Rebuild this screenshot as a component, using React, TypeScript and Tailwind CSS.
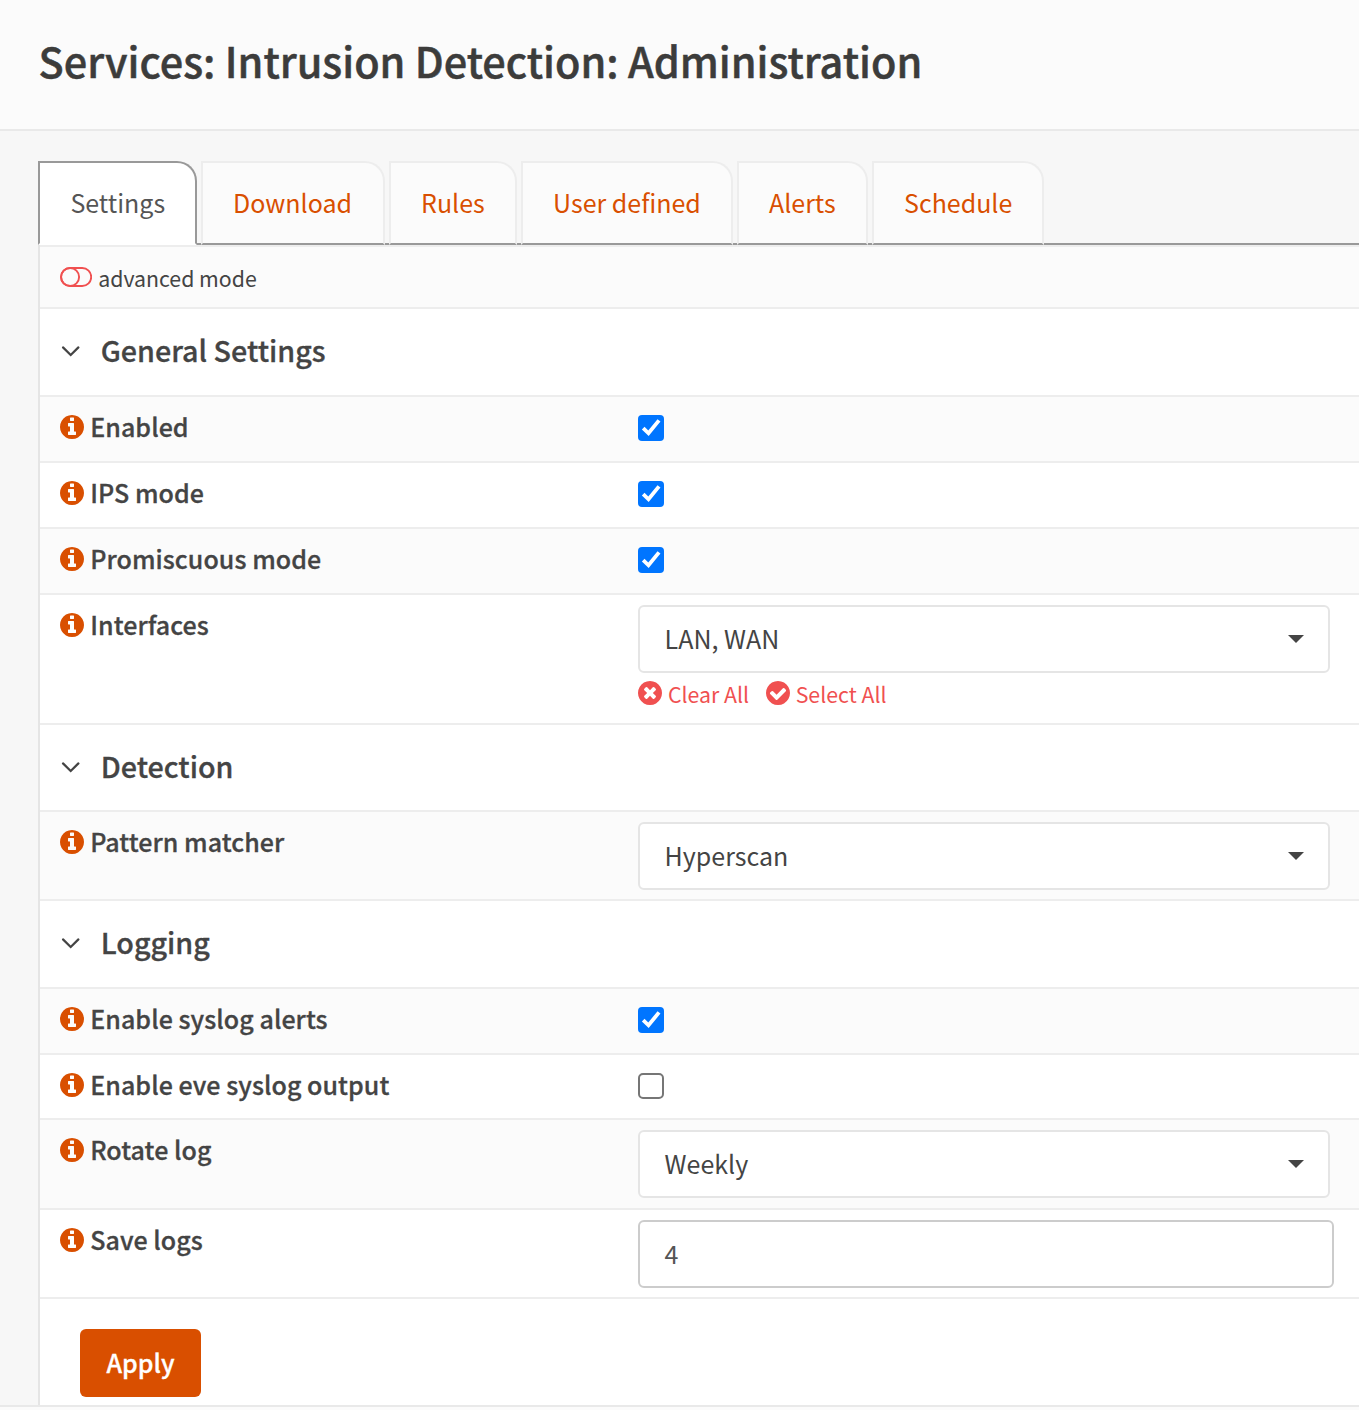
import type { ReactNode } from 'react';

const DISC =
  'M1664 896q0 209-103 385.5t-279.5 279.5-385.5 103-385.5-103-279.5-279.5-103-385.5 103-385.5 279.5-279.5 385.5-103 385.5 103 279.5 279.5 103 385.5z';
const INFO =
  'M1152 1376v-160q0-14-9-23t-23-9h-96v-512q0-14-9-23t-23-9h-320q-14 0-23 9t-9 23v160q0 14 9 23t23 9h96v320h-96q-14 0-23 9t-9 23v160q0 14 9 23t23 9h448q14 0 23-9t9-23zM1024 480v-160q0-14-9-23t-23-9h-192q-14 0-23 9t-9 23v160q0 14 9 23t23 9h192q14 0 23-9t9-23z';
const TIMES =
  'M1277 1122q0-26-19-45l-181-181 181-181q19-19 19-45 0-27-19-46l-90-90q-19-19-46-19-26 0-45 19l-181 181-181-181q-19-19-45-19-27 0-46 19l-90 90q-19 19-19 46 0 26 19 45l181 181-181 181q-19 19-19 45 0 27 19 46l90 90q19 19 46 19 26 0 45-19l181-181 181 181q19 19 45 19 27 0 46-19l90-90q19-19 19-46z';
const CHECK =
  'M1412 734q0-28-18-46l-91-90q-19-19-45-19t-45 19l-408 407-226-226q-19-19-45-19t-45 19l-91 90q-18 18-18 46 0 27 18 45l362 362q19 19 45 19 27 0 46-19l543-543q18-18 18-45z';

function DiscIcon({ glyph, className }: { glyph: string; className: string }) {
  return (
    <svg viewBox="128 128 1536 1536" className={`size-6 shrink-0 ${className}`} fill="currentColor">
      <path fillRule="evenodd" d={glyph + DISC} />
    </svg>
  );
}

function Toggle() {
  return (
    <svg viewBox="0 0 32 20" className="h-5 w-8 shrink-0 text-[#f05050]" fill="none" stroke="currentColor" strokeWidth="1.9">
      <rect x="1" y="1" width="30.2" height="18" rx="9" />
      <circle cx="10.1" cy="10" r="9" />
    </svg>
  );
}

function Checkbox({ checked }: { checked: boolean }) {
  return checked ? (
    <span role="checkbox" aria-checked="true" className="mt-2 block size-[26px] rounded-[4px] bg-[#0075ff]">
      <svg viewBox="0 0 26 26" className="size-[26px]" fill="none" stroke="#fff" strokeWidth="3.8">
        <path d="M5.2 13.2L10.5 18.3L21 5.4" />
      </svg>
    </span>
  ) : (
    <span role="checkbox" aria-checked="false" className="mt-2 block size-[26px] rounded-[5px] border-2 border-[#767676] bg-white" />
  );
}

function Select({ value }: { value: string }) {
  return (
    <div className="flex h-[68px] w-[692px] justify-between rounded-[6px] border-2 border-[#e5e5e5] bg-white pr-6 pl-[24.6px] leading-[62px]">
      <span>{value}</span>
      <svg viewBox="0 0 16 8" className="mt-7 h-2 w-4" fill="currentColor">
        <path d="M0 0H16L8 8Z" />
      </svg>
    </div>
  );
}

function Tab({ label, size }: { label: string; size: string }) {
  return (
    <button
      className={`-mb-0.5 h-[84px] rounded-tr-[20px] border-2 border-[#ededed] border-b-[#999] bg-[#fbfbfb] pb-0.5 pl-[30px] text-left leading-[78px] text-[#d94f00] ${size}`}
    >
      {label}
    </button>
  );
}

function Section({ title, size }: { title: string; size: string }) {
  return (
    <div className={`flex border-b-2 border-[#ededed] bg-white pl-[21px] ${size}`}>
      <svg viewBox="0 0 20 12" className="mt-9 h-3 w-5" fill="none" stroke="currentColor" strokeWidth="2.2" strokeLinecap="round">
        <path d="M2 2.4L9.7 10L17.4 2.4" />
      </svg>
      <h2 className="ml-[19.7px] text-[28.7px] leading-[82px] font-medium [-webkit-text-stroke:0.3px]">{title}</h2>
    </div>
  );
}

function Row({ label, size, children }: { label: string; size: string; children: ReactNode }) {
  return (
    <div className={`flex border-b-2 border-[#ededed] pt-2.5 pl-5 ${size}`}>
      <div className="flex w-[578px] shrink-0 gap-[6.2px]">
        <DiscIcon glyph={INFO} className="mt-2 text-[#d94f00]" />
        <span className="leading-[38px] font-medium tracking-[0.06px] [-webkit-text-stroke:0.3px]">{label}</span>
      </div>
      <div>{children}</div>
    </div>
  );
}

export default function App() {
  return (
    <div className="flex h-[1410px] flex-col overflow-hidden bg-[#f7f7f7] font-['Noto_Sans_CJK_SC',sans-serif] text-[25px] whitespace-nowrap text-[#444]">
      <header className="h-[131px] shrink-0 border-b-2 border-[#e9e9e9] bg-[#fbfbfb] pl-[38.6px]">
        <h1 className="text-[41.4px] leading-[120px] font-medium text-[#3c3c3b] [-webkit-text-stroke:0.5px]">
          Services: Intrusion Detection: Administration
        </h1>
      </header>

      <main className="h-[1274px] shrink-0 pt-[30px] pl-[38px]">
        <nav className="flex h-[84px] gap-1 border-b-2 border-[#999]">
          <button className="-mb-0.5 h-[84px] w-[159px] rounded-tr-[20px] border-2 border-[#999] border-b-white bg-white pb-0.5 pl-[30.4px] text-left leading-[78px] text-[#555]">
            Settings
          </button>
          <Tab label="Download" size="w-[184px]" />
          <Tab label="Rules" size="w-[128px]" />
          <Tab label="User defined" size="w-[212px]" />
          <Tab label="Alerts" size="w-[131px]" />
          <Tab label="Schedule" size="w-[172px]" />
        </nav>

        <section className="h-[1160px] border-l-2 border-[#e5e5e5] bg-white">
          <div className="flex h-16 gap-[6.2px] border-y-2 border-[#ededed] bg-[#fbfbfb] pl-5">
            <div className="pt-5">
              <Toggle />
            </div>
            <span className="text-[21.3px] leading-[61px]">advanced mode</span>
          </div>

          <Section title="General Settings" size="h-[88px]" />
          <Row label="Enabled" size="h-[66px] bg-[#fbfbfb]">
            <Checkbox checked />
          </Row>
          <Row label="IPS mode" size="h-[66px] bg-white">
            <Checkbox checked />
          </Row>
          <Row label="Promiscuous mode" size="h-[66px] bg-[#fbfbfb]">
            <Checkbox checked />
          </Row>
          <Row label="Interfaces" size="h-[130px] bg-white">
            <Select value="LAN, WAN" />
            <div className="flex pt-2 pl-[0.3px] text-[21.3px] leading-[25px] text-[#f05050]">
              <DiscIcon glyph={TIMES} className="" />
              <span className="ml-[5.7px] w-[98px]">Clear All</span>
              <DiscIcon glyph={CHECK} className="" />
              <span className="ml-[5.7px]">Select All</span>
            </div>
          </Row>

          <Section title="Detection" size="h-[87px]" />
          <Row label="Pattern matcher" size="h-[89px] bg-[#fbfbfb]">
            <Select value="Hyperscan" />
          </Row>

          <Section title="Logging" size="h-[88px]" />
          <Row label="Enable syslog alerts" size="h-[66px] bg-[#fbfbfb]">
            <Checkbox checked />
          </Row>
          <Row label="Enable eve syslog output" size="h-[65px] bg-white">
            <Checkbox checked={false} />
          </Row>
          <Row label="Rotate log" size="h-[90px] bg-[#fbfbfb]">
            <Select value="Weekly" />
          </Row>
          <Row label="Save logs" size="h-[89px] bg-white">
            <div className="h-[68px] w-[696px] rounded-[6px] border-2 border-[#ccc] bg-white pl-[24.6px] leading-[62px] text-[#555]">4</div>
          </Row>

          <div className="pt-[30px] pl-10">
            <button className="h-[68px] w-[121px] rounded-[6px] bg-[#d94f00] pb-0.5 text-center leading-[66px] font-medium text-white [-webkit-text-stroke:0.3px]">
              Apply
            </button>
          </div>
        </section>
      </main>

      <footer className="h-[5px] shrink-0 border-t-2 border-[#e9e9e9] bg-[#fbfbfb]" />
    </div>
  );
}
